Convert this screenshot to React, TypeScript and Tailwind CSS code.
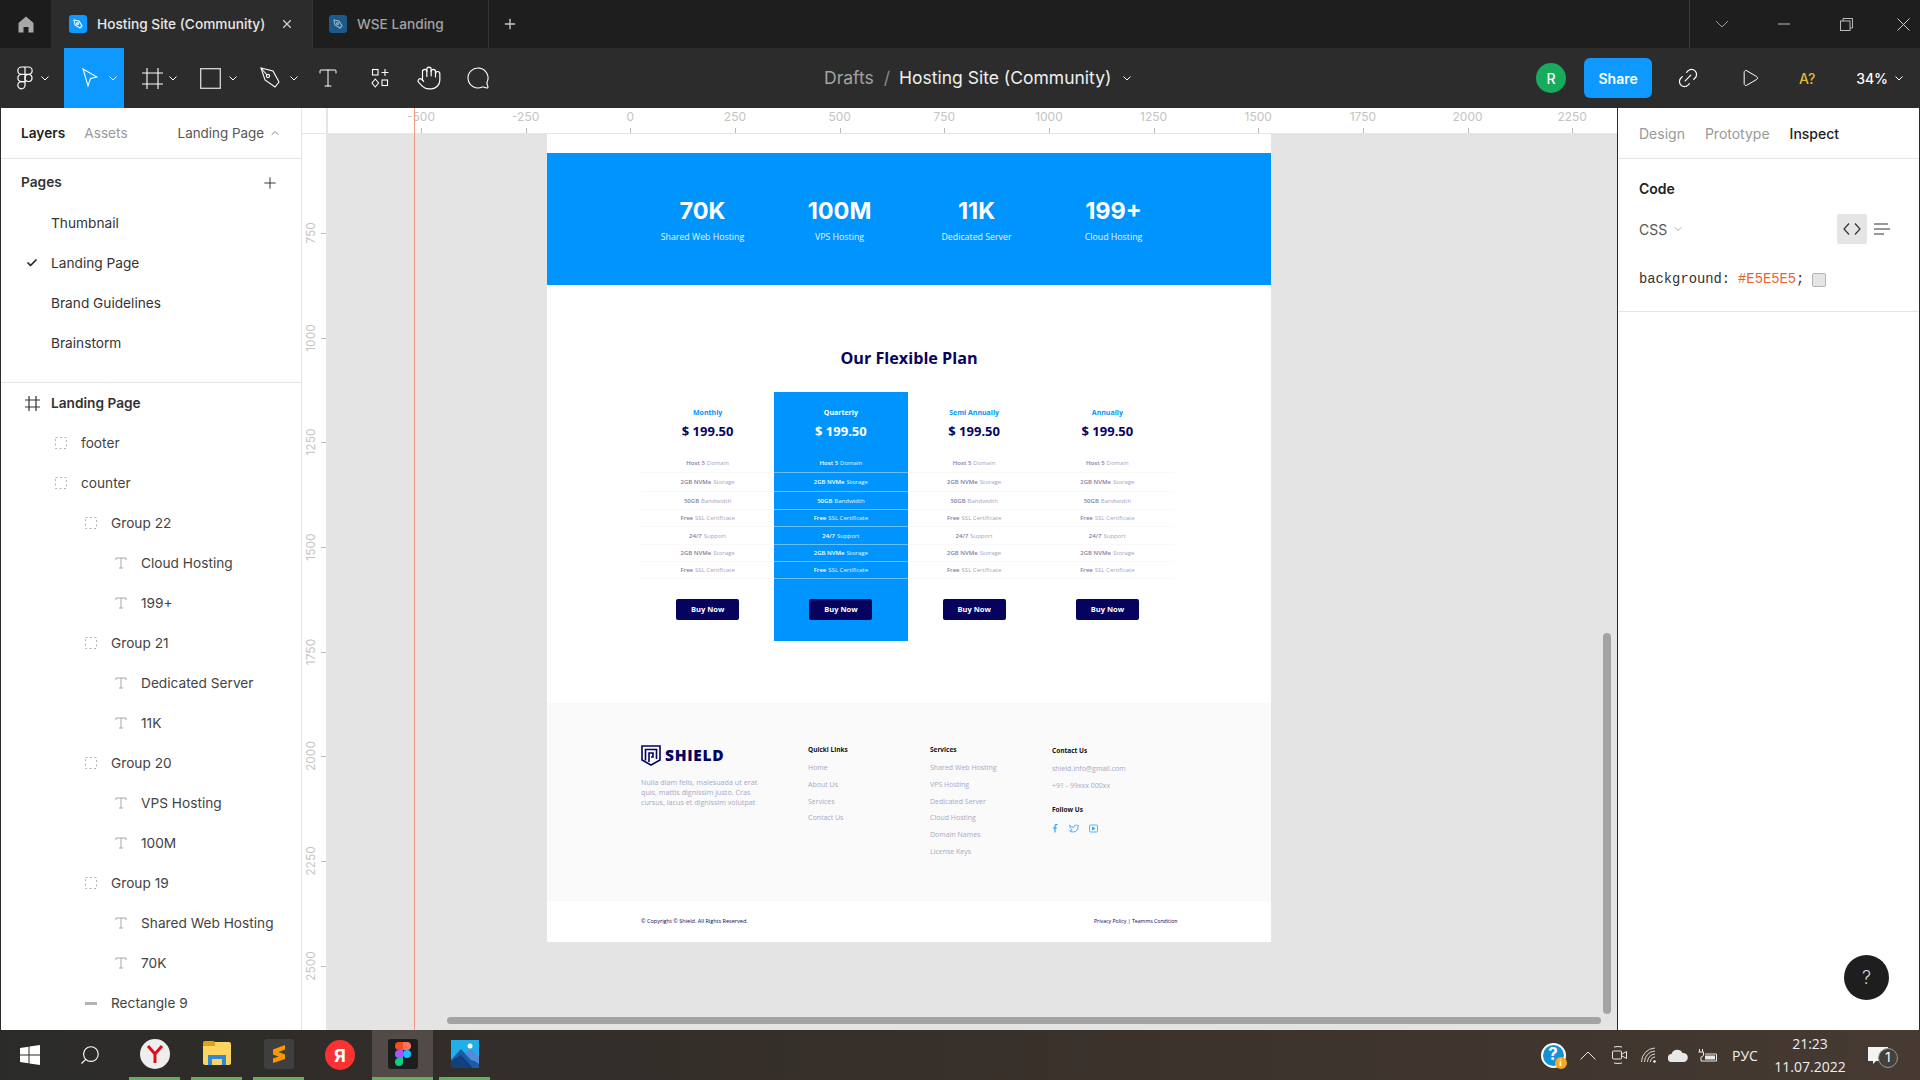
import { Check, ChevronDown, ChevronUp, Hand, Link2, MessageCircle, Play, Plus, Search, Type, X } from 'lucide-react';
import type { ReactNode } from 'react';

const stats = [
  { value: '70K', label: 'Shared Web Hosting' },
  { value: '100M', label: 'VPS Hosting' },
  { value: '11K', label: 'Dedicated Server' },
  { value: '199+', label: 'Cloud Hosting' },
];

const features = [
  { bold: 'Host 5', rest: 'Domain', h: 'h-[19px]' },
  { bold: '2GB NVMe', rest: 'Storage', h: 'h-[19px]' },
  { bold: '50GB', rest: 'Bandwidth', h: 'h-[18px]' },
  { bold: 'Free', rest: 'SSL Certificate', h: 'h-[17px]' },
  { bold: '24/7', rest: 'Support', h: 'h-[18px]' },
  { bold: '2GB NVMe', rest: 'Storage', h: 'h-[17px]' },
  { bold: 'Free', rest: 'SSL Certificate', h: 'h-[17px]' },
];

const plans = [
  { name: 'Monthly', active: false },
  { name: 'Quarterly', active: true },
  { name: 'Semi Annually', active: false },
  { name: 'Annually', active: false },
];

const hRuler = ['-500', '-250', '0', '250', '500', '750', '1000', '1250', '1500', '1750', '2000', '2250'];
const vRuler = ['750', '1000', '1250', '1500', '1750', '2000', '2250', '2500'];

const pages = ['Thumbnail', 'Landing Page', 'Brand Guidelines', 'Brainstorm'];

const layers = [
  { name: 'footer', kind: 'group', pad: 'pl-[54px]', gap: 'w-[26px]' },
  { name: 'counter', kind: 'group', pad: 'pl-[54px]', gap: 'w-[26px]' },
  { name: 'Group 22', kind: 'group', pad: 'pl-[84px]', gap: 'w-[26px]' },
  { name: 'Cloud Hosting', kind: 'text', pad: 'pl-[114px]', gap: 'w-[26px]' },
  { name: '199+', kind: 'text', pad: 'pl-[114px]', gap: 'w-[26px]' },
  { name: 'Group 21', kind: 'group', pad: 'pl-[84px]', gap: 'w-[26px]' },
  { name: 'Dedicated Server', kind: 'text', pad: 'pl-[114px]', gap: 'w-[26px]' },
  { name: '11K', kind: 'text', pad: 'pl-[114px]', gap: 'w-[26px]' },
  { name: 'Group 20', kind: 'group', pad: 'pl-[84px]', gap: 'w-[26px]' },
  { name: 'VPS Hosting', kind: 'text', pad: 'pl-[114px]', gap: 'w-[26px]' },
  { name: '100M', kind: 'text', pad: 'pl-[114px]', gap: 'w-[26px]' },
  { name: 'Group 19', kind: 'group', pad: 'pl-[84px]', gap: 'w-[26px]' },
  { name: 'Shared Web Hosting', kind: 'text', pad: 'pl-[114px]', gap: 'w-[26px]' },
  { name: '70K', kind: 'text', pad: 'pl-[114px]', gap: 'w-[26px]' },
  { name: 'Rectangle 9', kind: 'rect', pad: 'pl-[84px]', gap: 'w-[26px]' },
];

function TabIcon({ dim }: { dim?: boolean }) {
  return (
    <div className={`flex h-[18px] w-[18px] items-center justify-center rounded-[3px] ${dim ? 'bg-[#1c5a8c]' : 'bg-[#0d99ff]'}`}>
      <svg width="12" height="12" viewBox="0 0 12 12" fill="none" stroke={dim ? '#9fb4c4' : '#fff'} strokeWidth="1.1">
        <path d="M2 2 L7 3 L10 8 L8 10 L3 7 Z" />
        <circle cx="5.5" cy="5.5" r="1" />
      </svg>
    </div>
  );
}

function Caret({ className = 'ml-[5px]' }: { className?: string }) {
  return (
    <svg className={className} width="8" height="5" viewBox="0 0 8 5" fill="none" stroke="#fff" strokeWidth="1">
      <path d="M0.5 0.5 L4 4 L7.5 0.5" />
    </svg>
  );
}

function GroupIcon() {
  return (
    <svg width="12" height="12" viewBox="0 0 12 12" fill="none" stroke="#b3b3b3" strokeWidth="1" strokeDasharray="2 2.5">
      <rect x="0.5" y="0.5" width="11" height="11" />
    </svg>
  );
}

function TextIcon() {
  return (
    <svg width="12" height="12" viewBox="0 0 12 12" fill="none" stroke="#a8a8a8" strokeWidth="1">
      <path d="M1 3 V1 H11 V3 M6 1 V11 M4 11 H8" />
    </svg>
  );
}

function TrayCell({ className, children }: { className: string; children: ReactNode }) {
  return <div className={`flex h-full items-center justify-center ${className}`}>{children}</div>;
}

function ShieldLogo() {
  return (
    <div className="flex items-center h-[21px]">
      <svg width="20" height="21" viewBox="0 0 20 21" fill="none" stroke="#06035f" strokeWidth="1.6">
        <path d="M1 1 H19 V15 L10 20 L1 15 Z" />
        <path d="M4.5 15.5 V4.5 H15.5 V14" />
        <path d="M8 17 V8 H12 V12 H10" />
      </svg>
      <span className="ml-[4px] font-['Open_Sans',sans-serif] text-[15.5px] font-extrabold tracking-[0.7px] text-[#06035f]">SHIELD</span>
    </div>
  );
}

function PlanColumn({ name, active }: { name: string; active: boolean }) {
  return (
    <div className={`h-[249px] pt-[16px] text-center ${active ? 'bg-[#0094ff] text-white' : 'text-[#06035f]'}`}>
      <div className={`h-[10px] font-['Open_Sans',sans-serif] text-[7px] font-bold leading-[10px] ${active ? 'text-white' : 'text-[#0094ff]'}`}>{name}</div>
      <div className="mt-[3px] h-[20px] font-['Open_Sans',sans-serif] text-[13px] font-bold leading-[20px]">$ 199.50</div>
      <div className="mt-[13px]">
        {features.map((f, i) => (
          <div
            key={i}
            className={`flex items-center justify-center gap-[2px] border-b pt-[1px] text-[6px] ${f.h} ${
              active ? 'border-white/40 text-white/90' : 'border-[#f9f9f9] text-[#a5a4c4]'
            } font-['Open_Sans',sans-serif]`}
          >
            <span className={`font-semibold ${active ? 'text-white' : 'text-[#7f7da8]'}`}>{f.bold}</span>
            <span>{f.rest}</span>
          </div>
        ))}
      </div>
      <div className="mt-[20px] flex justify-center">
        <div className="flex h-[21px] w-[63px] items-center justify-center rounded-[2px] bg-[#06035f] font-['Open_Sans',sans-serif] text-[7.5px] font-bold text-white">
          Buy Now
        </div>
      </div>
    </div>
  );
}

function FooterLinks({ title, links, className }: { title: string; links: string[]; className: string }) {
  return (
    <div className={`pt-[43px] ${className}`}>
      <div className="h-[8px] font-['Open_Sans',sans-serif] text-[6.5px] font-bold leading-[8px] text-[#111]">{title}</div>
      <div className="mt-[6px] text-[7px] text-[#a9a8c6]">
        {links.map((l) => (
          <div key={l} className="h-[16.8px] leading-[16.8px]">{l}</div>
        ))}
      </div>
    </div>
  );
}

export default function App() {
  return (
    <div className="relative h-[1080px] w-[1920px] overflow-hidden bg-[#1e1e1e] font-['Inter',sans-serif] text-[13.7px]">
      {/* title bar */}
      <div className="flex h-12 bg-[#1e1e1e]">
        <div className="flex w-[52px] items-center justify-center border-r border-[#2c2c2c] bg-[#1c1c1c]">
          <svg width="16" height="17" viewBox="0 0 16 17" fill="#a8a8a8">
            <path d="M8 0.5 L15.5 7 V16.5 H10.5 V11 H5.5 V16.5 H0.5 V7 Z" />
          </svg>
        </div>
        <div className="flex w-[260px] items-center bg-[#2c2c2c] pl-[17px] font-medium text-[#e8e8e8]">
          <TabIcon />
          <span className="ml-[10px] w-[183px] whitespace-nowrap">Hosting Site (Community)</span>
          <X size={14} color="#cfcfcf" />
        </div>
        <div className="flex w-[177px] items-center border-x border-[#333] pl-[16px] font-medium text-[#a3a3a3]">
          <TabIcon dim />
          <span className="ml-[10px]">WSE Landing</span>
        </div>
        <div className="ml-[13px] flex items-center">
          <Plus size={16} color="#c8c8c8" />
        </div>
        <div className="ml-auto flex w-[231px] items-center border-l border-[#3a3a3a] text-[#c8c8c8]">
          <div className="ml-[25px]">
            <svg width="14" height="8" viewBox="0 0 14 8" fill="none" stroke="#9a9a9a"><path d="M1 1 L7 7 L13 1" /></svg>
          </div>
          <div className="ml-[49px]">
            <svg width="12" height="2" viewBox="0 0 12 2" fill="none" stroke="#bbb"><path d="M0 1 H12" /></svg>
          </div>
          <div className="ml-[50px]">
            <svg width="13" height="13" viewBox="0 0 13 13" fill="none" stroke="#bbb"><rect x="0.5" y="3" width="9.5" height="9.5" /><path d="M3 3 V0.5 H12.5 V10 H10" /></svg>
          </div>
          <div className="ml-[44px]">
            <svg width="13" height="13" viewBox="0 0 13 13" fill="none" stroke="#ccc"><path d="M0.5 0.5 L12.5 12.5 M12.5 0.5 L0.5 12.5" /></svg>
          </div>
        </div>
      </div>

      {/* toolbar */}
      <div className="flex h-[60px] items-center bg-[#2c2c2c] text-white">
        <div className="flex w-[824px] items-center">
          <div className="flex w-[64px] items-center pl-[17px]">
            <svg width="16" height="24" viewBox="0 0 16 24" fill="none" stroke="#fff" strokeWidth="1.2">
              <path d="M8 1 H4.5 a3.5 3.5 0 0 0 0 7.3 H8 Z M8 1 h3.5 a3.5 3.5 0 0 1 0 7.3 H8 M8 8.3 H4.5 a3.5 3.5 0 0 0 0 7.3 H8 Z" />
              <circle cx="11.5" cy="12" r="3.5" />
              <path d="M4.5 15.6 H8 V19.3 a3.6 3.6 0 1 1 -3.5 -3.7 Z" />
            </svg>
            <Caret className="ml-[8px]" />
          </div>
          <div className="flex h-[60px] w-[60px] items-center bg-[#0d99ff] pl-[18px]">
            <svg width="16" height="22" viewBox="0 0 16 20" fill="none" stroke="#fff" strokeWidth="1.1">
              <path d="M1 1 L15 9 L8.5 10.5 L6 18 Z" />
            </svg>
            <Caret className="ml-[11px]" />
          </div>
          <div className="flex w-[58px] items-center pl-[18px]">
            <svg width="21" height="21" viewBox="0 0 21 21" fill="none" stroke="#fff" strokeWidth="1.1">
              <path d="M5 0 V21 M16 0 V21 M0 5 H21 M0 16 H21" />
            </svg>
            <Caret className="ml-[6px]" />
          </div>
          <div className="flex w-[58px] items-center pl-[18px]">
            <svg width="21" height="21" viewBox="0 0 21 21" fill="none" stroke="#d8d8d8" strokeWidth="1.3">
              <rect x="0.7" y="0.7" width="19.6" height="19.6" />
            </svg>
            <Caret className="ml-[8px]" />
          </div>
          <div className="flex w-[60px] items-center pl-[20px]">
            <svg width="21" height="22" viewBox="0 0 21 22" fill="none" stroke="#fff" strokeWidth="1.1">
              <path d="M1 1 L13 4 L19 15 L15 20 L5 13 Z" />
              <circle cx="8" cy="9" r="1.6" />
              <path d="M1 1 L7 8" />
            </svg>
            <Caret className="ml-[9px] shrink-0" />
          </div>
          <div className="flex w-[46px] items-center pl-[16px]">
            <Type size={24} strokeWidth={1} />
          </div>
          <div className="ml-[25px] flex w-[24px] items-center">
            <svg width="18" height="20" viewBox="0 0 18 20" fill="none" stroke="#fff" strokeWidth="1.1">
              <rect x="1.5" y="1.5" width="5.5" height="5.5" />
              <path d="M14 1 V8 M10.5 4.5 H17.5" />
              <path d="M4.3 11 L7.6 15 L4.3 19 L1 15 Z" />
              <rect x="11" y="12" width="5.5" height="5.5" />
            </svg>
          </div>
          <div className="ml-[21px] flex w-[28px] items-center">
            <Hand size={26} strokeWidth={1.1} />
          </div>
          <div className="ml-[23px] flex items-center">
            <MessageCircle size={24} strokeWidth={1.1} className="-scale-x-100 -ml-[1px]" />
          </div>
        </div>
        <div className="flex items-center whitespace-nowrap text-[17.5px]">
          <span className="text-[#a3a3a3]">Drafts</span>
          <span className="ml-[10px] text-[#8a8a8a]">/</span>
          <span className="ml-[9px] text-[#f0f0f0]">Hosting Site (Community)</span>
          <Caret className="ml-[12px]" />
        </div>
        <div className="ml-auto flex items-center pr-[17px]">
          <div className="flex h-[30px] w-[30px] items-center justify-center rounded-full bg-[#18ab5e] text-[14px] font-medium">R</div>
          <div className="ml-[18px] flex h-10 w-[68px] items-center justify-center rounded-md bg-[#0d99ff] text-[14px] font-semibold">Share</div>
          <div className="ml-[24px] w-6">
            <Link2 size={24} strokeWidth={1.2} className="-rotate-45" />
          </div>
          <div className="ml-[38px] flex w-6 justify-center">
            <Play size={20} strokeWidth={1.2} />
          </div>
          <div className="ml-[32px] w-[26px] text-center text-[14px] font-medium text-[#e9b52e]">A?</div>
          <div className="ml-[36px] flex items-center text-[14px] font-medium">
            <span>34%</span>
            <Caret className="ml-[7px]" />
          </div>
        </div>
      </div>

      {/* main */}
      <div className="relative flex h-[922px]">
        {/* left panel */}
        <div className="h-full w-[302px] shrink-0 overflow-hidden border-x border-r-[#e5e5e5] border-l-[#2c2c2c] bg-white text-[#333]">
          <div className="flex h-[51px] items-center border-b border-[#e5e5e5] pl-[20px] pr-[20px]">
            <span className="font-semibold text-[#222]">Layers</span>
            <span className="ml-[19px] text-[#9a9a9a]">Assets</span>
            <span className="ml-auto text-[13.4px] text-[#555]">Landing Page</span>
            <ChevronUp size={12} color="#888" className="ml-[5px]" />
          </div>
          <div className="flex h-[44px] items-center pl-[20px] pr-[22px] pt-[3px]">
            <span className="font-semibold text-[#333]">Pages</span>
            <Plus size={18} strokeWidth={1.3} className="ml-auto text-[#333]" />
          </div>
          <div className="border-b border-[#e5e5e5] pb-[19px]">
            {pages.map((p, i) => (
              <div key={p} className="flex h-10 items-center pl-[25px]">
                <div className="w-[25px]">{i === 1 && <Check size={12} strokeWidth={3.5} color="#222" />}</div>
                <span className="text-[#333]">{p}</span>
              </div>
            ))}
          </div>
          <div className="flex h-10 items-center pl-[24px] font-semibold text-[#333]">
            <svg className="mr-[11px]" width="15" height="15" viewBox="0 0 15 15" fill="none" stroke="#333" strokeWidth="1.2">
              <path d="M4 0 V15 M11 0 V15 M0 4 H15 M0 11 H15" />
            </svg>
            Landing Page
          </div>
          {layers.map((l, i) => (
            <div key={i} className={`flex h-10 items-center ${l.pad}`}>
              <div className={`flex items-center ${l.gap}`}>
                {l.kind === 'group' && <GroupIcon />}
                {l.kind === 'text' && <TextIcon />}
                {l.kind === 'rect' && <div className="h-[3px] w-[12px] bg-[#b3b3b3]" />}
              </div>
              <span className="whitespace-nowrap text-[#444]">{l.name}</span>
            </div>
          ))}
        </div>

        {/* rulers and canvas */}
        <div className="flex h-full w-[1316px] shrink-0 flex-col border-r border-[#2c2c2c]">
          <div className="flex h-[26px] shrink-0 border-b border-[#e5e5e5] bg-white">
            <div className="w-[26px] shrink-0 border-r-2 border-[#e5e5e5]" />
            <div className="flex pl-[40.67px]">
              {hRuler.map((t) => (
                <div key={t} className="relative flex w-[104.67px] shrink-0 justify-center text-[12px] leading-[18px] text-[#c4c4c4]">
                  {t}
                  <div className="absolute bottom-0 left-1/2 h-[5px] w-px bg-[#bbb]" />
                </div>
              ))}
            </div>
          </div>
          <div className="flex min-h-0 flex-1">
            <div className="w-[26px] shrink-0 overflow-hidden border-r-2 border-[#e5e5e5] bg-white pt-[46.67px]">
              {vRuler.map((t) => (
                <div key={t} className="relative flex h-[104.67px] items-center justify-center pr-[6px]">
                  <span className="-rotate-90 text-[12px] text-[#c4c4c4]">{t}</span>
                  <div className="absolute right-0 top-1/2 h-px w-[5px] bg-[#bbb]" />
                </div>
              ))}
            </div>
            <div className="min-w-0 flex-1 overflow-hidden bg-[#e4e4e4] pl-[219px]">
              <div className="w-[724px] bg-white font-['Open_Sans',sans-serif]">
                <div className="h-[19px]" />
                <div className="flex h-[132px] items-start bg-[#0094ff] pl-[87px] pt-[41px] text-white">
                  {stats.map((s) => (
                    <div key={s.label} className="w-[137px] text-center">
                      <div className="h-[34px] font-['Inter',sans-serif] text-[23.5px] font-bold leading-[34px]">{s.value}</div>
                      <div className="mt-[4px] text-[8.8px] leading-[10px] text-white/90">{s.label}</div>
                    </div>
                  ))}
                </div>
                <div className="mt-[61px] h-6 text-center text-[16.2px] font-bold leading-6 text-[#06035f]">Our Flexible Plan</div>
                <div className="ml-[94px] mt-[22px] grid w-[533px] grid-cols-4">
                  {plans.map((p) => (
                    <PlanColumn key={p.name} name={p.name} active={p.active} />
                  ))}
                </div>
                <div className="mt-[62px] flex h-[198px] bg-[#fafafa] pl-[94px] font-['Open_Sans',sans-serif]">
                  <div className="w-[167px] pt-[42px]">
                    <ShieldLogo />
                    <p className="mt-[11px] w-[124px] text-[7.2px] leading-[10px] text-[#a9a8c6]">
                      Nulla diam felis, malesuada ut erat quis, mattis dignissim justo. Cras cursus, lacus et dignissim volutpat
                    </p>
                  </div>
                  <FooterLinks title="Quickl Links" links={['Home', 'About Us', 'Services', 'Contact Us']} className="w-[122px]" />
                  <FooterLinks
                    title="Services"
                    links={['Shared Web Hosting', 'VPS Hosting', 'Dedicated Server', 'Cloud Hosting', 'Domain Names', 'License Keys']}
                    className="w-[122px]"
                  />
                  <div className="pt-[44px]">
                    <div className="h-[8px] text-[6.5px] font-bold leading-[8px] text-[#111]">Contact Us</div>
                    <div className="mt-[5px] h-[17px] text-[7px] leading-[17px] text-[#a9a8c6]">shield.info@gmail.com</div>
                    <div className="h-[17px] text-[7px] leading-[17px] text-[#a9a8c6]">+91 - 99xxx 000xx</div>
                    <div className="mt-[12px] h-[8px] text-[6.5px] font-bold leading-[8px] text-[#111]">Follow Us</div>
                    <div className="mt-[10px] flex items-center gap-[10px]">
                      <svg width="7" height="9" viewBox="0 0 7 9" fill="none" stroke="#2aa5ff" strokeWidth="1.2"><path d="M5.5 0.7 H4 Q3 0.7 3 2 V8.5 M1 4 H5" /></svg>
                      <svg width="10" height="9" viewBox="0 0 10 9" fill="none" stroke="#2aa5ff" strokeWidth="0.8"><path d="M0.5 1 Q2.5 3.5 5 3.5 Q5 1 7 1 Q8 1 8.5 1.8 L9.5 1.5 L9 3 Q9 7.5 4 8 Q2 8 0.7 7 Q2.5 7 3.2 6 Q1 5 0.5 1 Z" /></svg>
                      <svg width="9" height="9" viewBox="0 0 9 9" fill="none" stroke="#2aa5ff" strokeWidth="0.8"><rect x="0.5" y="1" width="8" height="7" rx="1" /><path d="M3.5 3 L6 4.5 L3.5 6 Z" fill="#2aa5ff" /></svg>
                    </div>
                  </div>
                </div>
                <div className="flex h-[41px] items-center pl-[94px] text-[5.5px] text-[#06035f]">
                  <span className="w-[453px]">© Copyright © Shield. All Rights Reserved.</span>
                  <span className="text-[5.2px]">Privacy Policy | Teamms Condition</span>
                </div>
              </div>
            </div>
          </div>
        </div>

        {/* right panel */}
        <div className="h-full flex-1 border-r border-[#2c2c2c] bg-white text-[14px]">
          <div className="flex h-[51px] items-center border-b border-[#e5e5e5] pl-[21px] text-[#999]">
            <span>Design</span>
            <span className="ml-[20px]">Prototype</span>
            <span className="ml-[20px] font-medium text-[#222]">Inspect</span>
          </div>
          <div className="h-[153px] border-b border-[#e5e5e5] pl-[21px]">
            <div className="h-[55px] pt-[20px] font-semibold leading-5 text-[#222]">Code</div>
            <div className="flex h-[30px] items-center pr-[29px] text-[#555]">
              <span>CSS</span>
              <ChevronDown size={12} color="#aaa" className="ml-[5px]" />
              <div className="ml-auto flex h-[30px] w-[30px] items-center justify-center rounded-[2px] bg-[#e5e5e5]">
                <svg width="18" height="12" viewBox="0 0 18 12" fill="none" stroke="#333" strokeWidth="1.2"><path d="M6 0.5 L1 6 L6 11.5 M12 0.5 L17 6 L12 11.5" /></svg>
              </div>
              <svg className="ml-[7px]" width="16" height="12" viewBox="0 0 16 12" fill="none" stroke="#333" strokeWidth="1.2"><path d="M0 1 H14 M0 6 H16 M0 11 H10" /></svg>
            </div>
            <div className="mt-[26px] flex h-5 items-center font-['Liberation_Mono',monospace] text-[13.8px] text-[#333]">
              background:
              <span className="ml-[8px] text-[#e8622c]">#E5E5E5</span>;
              <div className="ml-[8px] h-[14px] w-[14px] rounded-[2px] border border-[#b3b3b3] bg-[#e5e5e5]" />
            </div>
          </div>
        </div>

        {/* overlays on the canvas */}
        <div className="absolute bottom-0 left-[414px] top-0 w-px bg-[#f39a85]" />
        <div className="absolute left-[1603px] top-[525px] h-[381px] w-2 rounded-full bg-[#a3a3a3]" />
        <div className="absolute left-[447px] top-[909px] h-[7px] w-[1154px] rounded-full bg-[#a3a3a3]" />
        <div className="absolute left-[1844px] top-[847px] flex h-[45px] w-[45px] items-center justify-center rounded-full bg-[#1e1e1e] text-[18px] font-light text-[#d8d8d8]">?</div>
      </div>

      {/* taskbar */}
      <div className="flex h-[50px] items-center bg-gradient-to-r from-[#2b2b29] via-[#38302a] to-[#463a32] text-white">
        <TrayCell className="w-[60px]">
          <svg width="20" height="20" viewBox="0 0 20 20" fill="#fff">
            <path d="M0 3 L8.5 1.8 V9.5 H0 Z M9.5 1.6 L20 0 V9.5 H9.5 Z M0 10.5 H8.5 V18.2 L0 17 Z M9.5 10.5 H20 V20 L9.5 18.4 Z" />
          </svg>
        </TrayCell>
        <TrayCell className="w-[60px]">
          <Search size={22} strokeWidth={1.2} className="-scale-x-100" />
        </TrayCell>
        <TrayCell className="ml-[9px] w-[51px] border-b-[3px] border-[#5fb060]">
          <div className="flex h-[30px] w-[30px] items-center justify-center rounded-full bg-[#eeeeee]">
            <svg width="18" height="20" viewBox="0 0 18 20" fill="none" stroke="#d9101a" strokeWidth="3"><path d="M2 2 L9 10 L16 2 M9 10 V19" /></svg>
          </div>
        </TrayCell>
        <TrayCell className="ml-[11px] w-[51px] border-b-[3px] border-[#5fb060]">
          <div className="relative h-[23px] w-[28px] rounded-[2px] bg-[#fcd462]">
            <div className="absolute -top-[1px] left-0 h-[5px] w-[12px] rounded-t-[2px] bg-[#dfa40d]" />
            <div className="absolute bottom-0 left-[5px] h-[10px] w-[18px] border-[4px] border-b-0 border-[#2f88d8]" />
          </div>
        </TrayCell>
        <TrayCell className="ml-[11px] w-[51px] border-b-[3px] border-[#5fb060]">
          <div className="flex h-[30px] w-[30px] items-center justify-center rounded-[3px] bg-[#3f3f3f]">
            <svg width="18" height="20" viewBox="0 0 18 20" fill="#ff9800">
              <path d="M3 5.5 L15 1 V5.5 L3 10 Z M3 6 L15 10.5 V15 L3 10.5 Z M3 14.5 L15 10.5 V15 L3 19 Z" />
            </svg>
          </div>
        </TrayCell>
        <TrayCell className="ml-[4px] w-[64px]">
          <div className="flex h-[30px] w-[30px] items-center justify-center rounded-full bg-[#f93333] text-[18px] font-bold">Я</div>
        </TrayCell>
        <TrayCell className="w-[61px] border-b-[3px] border-[#5fb060] bg-[#514a47]">
          <div className="flex h-[30px] w-[30px] items-center justify-center rounded-[3px] bg-[#1e1e1e]">
            <svg width="16" height="24" viewBox="0 0 16 24">
              <path d="M8 0 H4 a4 4 0 0 0 0 8 H8 Z" fill="#f24e1e" />
              <path d="M8 0 H12 a4 4 0 0 1 0 8 H8 Z" fill="#ff7262" />
              <path d="M8 8 H4 a4 4 0 0 0 0 8 H8 Z" fill="#a259ff" />
              <circle cx="12" cy="12" r="4" fill="#1abcfe" />
              <path d="M4 16 H8 V20 a4 4 0 1 1 -4 -4 Z" fill="#0acf83" />
            </svg>
          </div>
        </TrayCell>
        <TrayCell className="ml-[6px] w-[51px] border-b-[3px] border-[#5fb060]">
          <svg width="28" height="28" viewBox="0 0 28 28">
            <rect width="28" height="28" fill="#22aeea" />
            <circle cx="19" cy="6" r="2.5" fill="#fff" />
            <path d="M0 20 L10 9 L20 20 L28 22 V28 H0 Z" fill="#1a5da3" />
            <path d="M14 14 L20 9 L28 17 V24 Z" fill="#5c87d8" />
            <path d="M0 21 L10 15 L22 28 H0 Z" fill="#133f7d" />
          </svg>
        </TrayCell>

        <div className="ml-auto flex h-full items-center pr-[19px]">
          <TrayCell className="w-[36px]">
            <div className="relative flex h-[25px] w-[25px] items-center justify-center rounded-full border-[2px] border-white bg-[#1592d6] text-[17px] font-bold">
              ?
              <div className="absolute -bottom-[3px] -right-[3px] flex h-[12px] w-[12px] items-center justify-center rounded-full bg-[#f4a91f] text-[9px] font-bold">i</div>
            </div>
          </TrayCell>
          <TrayCell className="w-[34px]">
            <svg width="16" height="9" viewBox="0 0 16 9" fill="none" stroke="#e8e8e8"><path d="M0.5 8.5 L8 1 L15.5 8.5" /></svg>
          </TrayCell>
          <TrayCell className="w-[28px]">
            <svg width="15" height="18" viewBox="0 0 15 18" fill="none" stroke="#e8e8e8"><path d="M2 1 Q6 0 10 1 M2 17 Q6 18 10 17" /><rect x="0.5" y="5" width="9" height="8" rx="1" /><path d="M10 8 L14.5 5.5 V12.5 L10 10" /></svg>
          </TrayCell>
          <TrayCell className="w-[32px]">
            <svg width="16" height="16" viewBox="0 0 16 16" fill="none" stroke="#d8d8d8"><path d="M0.5 15 A14 14 0 0 1 14 1 M3.5 15 A11 11 0 0 1 14 4 M6.5 15 A8 8 0 0 1 14 7 M9.5 15 A5 5 0 0 1 14 10" /><circle cx="13.5" cy="14.5" r="1.2" fill="#fff" stroke="none" /></svg>
          </TrayCell>
          <TrayCell className="w-[26px]">
            <svg width="20" height="13" viewBox="0 0 20 13" fill="#e8e8e8"><path d="M4 13 a4 4 0 0 1 -0.5 -8 a6 6 0 0 1 11 -1 a4.5 4.5 0 0 1 1.5 9 Z" /></svg>
          </TrayCell>
          <TrayCell className="w-[34px]">
            <svg width="20" height="13" viewBox="0 0 20 13" fill="none" stroke="#e8e8e8"><path d="M1.5 0 V3 M4.5 0 V3 M0.5 3 H5.5 V6 Q5 8 3 8 V12 H18.5 V5 H7" /><rect x="7" y="6.5" width="10" height="4" fill="#e8e8e8" stroke="none" /></svg>
          </TrayCell>
          <TrayCell className="w-[40px] font-['Open_Sans',sans-serif] text-[14px] text-[#eee]">РУС</TrayCell>
          <div className="flex w-[90px] flex-col items-center font-['Open_Sans',sans-serif] text-[14px] leading-[23px] text-[#eee]">
            <span>21:23</span>
            <span>11.07.2022</span>
          </div>
          <TrayCell className="w-[46px]">
            <div className="relative">
              <svg width="20" height="17" viewBox="0 0 20 17" fill="#f4f4f4">
                <path d="M0 0 H20 V14 H8 L5 17 V14 H0 Z" />
              </svg>
              <div className="absolute -bottom-[4px] -right-[10px] flex h-[20px] w-[20px] items-center justify-center rounded-full border border-[#999] bg-[#45403b] text-[13px] text-white">1</div>
            </div>
          </TrayCell>
        </div>
      </div>
    </div>
  );
}
